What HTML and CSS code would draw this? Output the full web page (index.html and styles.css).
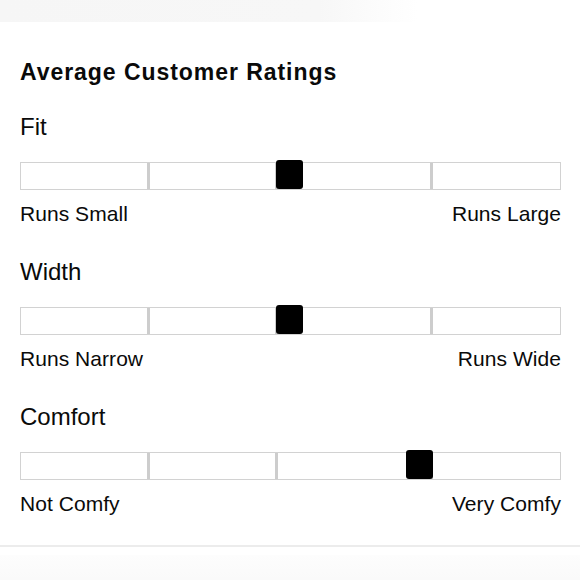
FILE: index.html
```html
<!DOCTYPE html>
<html>
<head>
<meta charset="utf-8">
<link rel="stylesheet" href="styles.css">
</head>
<body>
<div class="band band-top"></div>
<section class="ratings">
  <h2 class="heading">Average Customer Ratings</h2>

  <div class="rating">
    <div class="rating-title">Fit</div>
    <div class="bar">
      <div class="seg"></div><div class="seg"></div><div class="seg"></div><div class="seg"></div>
      <div class="knob" style="left:255px"></div>
    </div>
    <div class="labels"><span>Runs Small</span><span>Runs Large</span></div>
  </div>

  <div class="rating">
    <div class="rating-title">Width</div>
    <div class="bar">
      <div class="seg"></div><div class="seg"></div><div class="seg"></div><div class="seg"></div>
      <div class="knob" style="left:255px"></div>
    </div>
    <div class="labels"><span>Runs Narrow</span><span>Runs Wide</span></div>
  </div>

  <div class="rating">
    <div class="rating-title">Comfort</div>
    <div class="bar">
      <div class="seg"></div><div class="seg"></div><div class="seg"></div><div class="seg"></div>
      <div class="knob" style="left:385px"></div>
    </div>
    <div class="labels"><span>Not Comfy</span><span>Very Comfy</span></div>
  </div>
</section>
<div class="rule"></div>
<div class="band band-bottom"></div>
</body>
</html>
```

FILE: styles.css
```css
html, body {
  margin: 0;
  padding: 0;
  background: #fff;
}
body {
  width: 580px;
  height: 580px;
  overflow: hidden;
  font-family: "Liberation Sans", Arial, sans-serif;
  color: #0a0a0a;
}
.band {
  height: 22px;
}
.band-top {
  background: linear-gradient(to right, #f6f6f6 0%, #f7f7f7 55%, #ffffff 72%);
}
.ratings {
  padding: 0 19px 0 20px;
}
.heading {
  margin: 37px 0 0;
  font-size: 23px;
  line-height: 27px;
  font-weight: bold;
  letter-spacing: 0.95px;
}
.rating {
  margin-top: 27px;
}
.rating + .rating {
  margin-top: 32px;
}
.rating-title {
  font-size: 24px;
  line-height: 28px;
}
.bar {
  position: relative;
  margin-top: 21px;
  height: 26px;
  border: 1px solid #d2d2d2;
  background: #cdcdcd;
  display: grid;
  grid-template-columns: 126px 125px 152px 1fr;
  column-gap: 3px;
}
.seg {
  background: #fff;
}
.knob {
  position: absolute;
  top: -3px;
  width: 27px;
  height: 29px;
  background: #000;
  border-radius: 3px;
}
.labels {
  margin-top: 12px;
  display: flex;
  justify-content: space-between;
  font-size: 21px;
  line-height: 24px;
  letter-spacing: 0.05px;
}
.rule {
  margin-top: 29px;
  height: 2px;
  background: #ececec;
}
.band-bottom {
  margin-top: 8px;
  height: 40px;
  background: linear-gradient(to bottom, #fdfdfd, #f8f8f8);
}
```
